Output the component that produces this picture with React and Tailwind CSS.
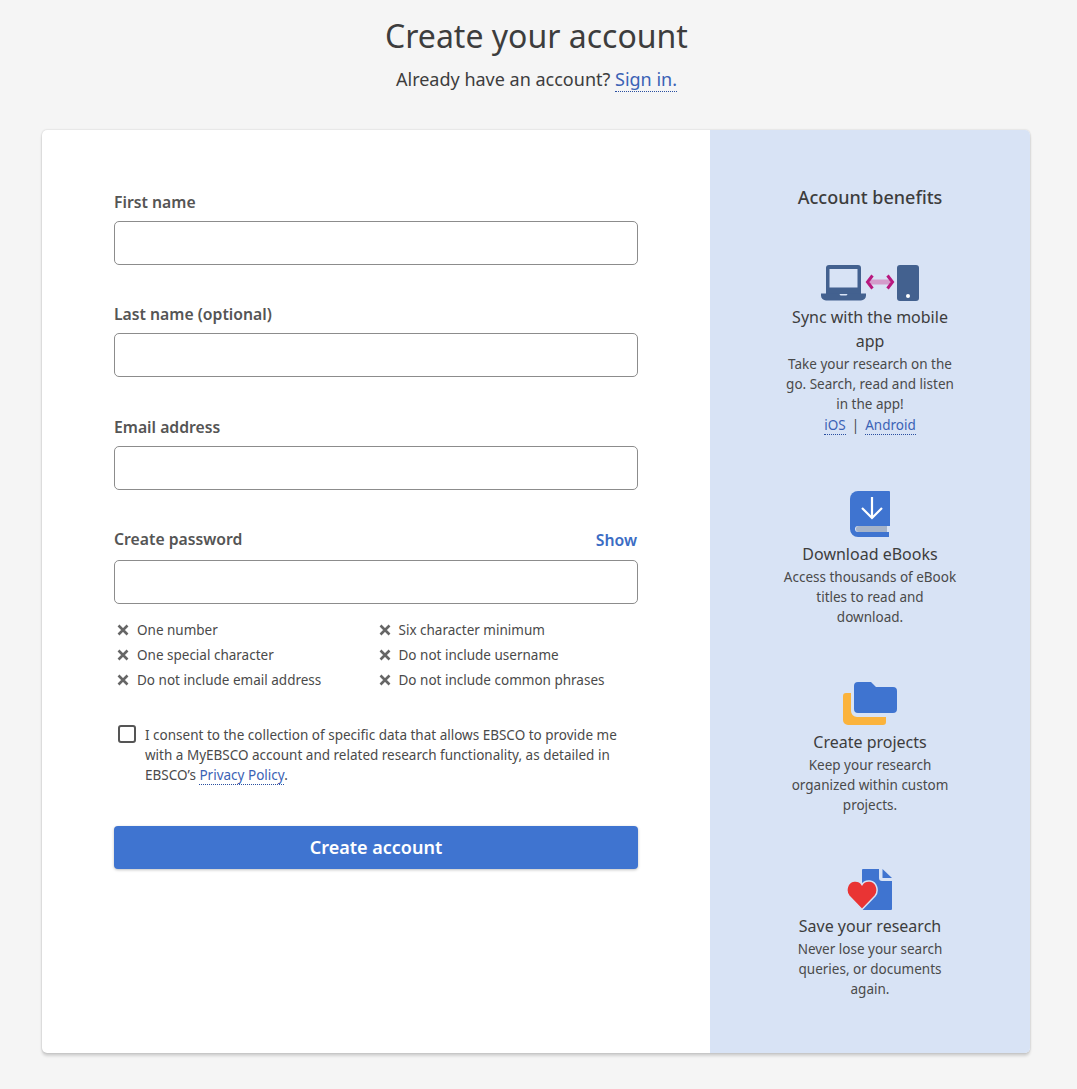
const Field = ({ label, action, labelGap = 'mb-[7px]', className = '' }) => (
  <div className={className}>
    <div className={`flex items-center justify-between h-[24px] ${labelGap}`}>
      <label className="text-[15.75px] leading-[24px] font-semibold text-[#555555]">{label}</label>
      {action && <button className="text-[15.75px] leading-[24px] font-semibold text-[#3b6cc4] pr-px mt-[2px]">{action}</button>}
    </div>
    <input type="text" className="block w-full h-[44px] rounded-[5px] border border-[#8c8c8c] bg-white" />
  </div>
)

const Req = ({ children }) => (
  <div className="flex items-center h-[25px] text-[13.5px] text-[#4a4a4a]">
    <svg width="12" height="12" viewBox="0 0 12 12" className="mr-[8px] ml-[2px] mb-[2px] shrink-0">
      <path d="M1.500 1.500l9 9M10.500 1.500l-9 9" stroke="#666666" strokeWidth="2.600" />
    </svg>
    {children}
  </div>
)

const Benefit = ({ icon, title, iconClass, children }) => (
  <div className="flex flex-col items-center text-center">
    <div className={`flex items-start justify-center ${iconClass}`}>{icon}</div>
    <h3 className="text-[16px] leading-[24px] font-normal text-[#3d3d3d] w-[180px]">{title}</h3>
    <div className="mt-px text-[13.5px] leading-[20px] text-[#4a4a4a] w-[176px]">{children}</div>
  </div>
)

const SyncIcon = () => (
  <svg width="100" height="38" viewBox="0 0 100 38">
    <path d="M6 4a3 3 0 0 1 3-3h29a3 3 0 0 1 3 3v26H6z M9.500 5v18.500h28V5z" fill="#43618f" fillRule="evenodd" />
    <path d="M1 29.500h18l1.500 2h6l1.500-2h18v2a5 5 0 0 1-5 5H6a5 5 0 0 1-5-5z" fill="#43618f" />
    <rect x="50" y="15.500" width="20" height="5" fill="#d49ccb" />
    <path d="M52.500 11.500L47.500 18l5 6.500M67.500 11.500l5 6.500-5 6.500" fill="none" stroke="#b8187f" strokeWidth="3" />
    <rect x="77" y="1" width="22" height="36" rx="3" fill="#43618f" />
    <circle cx="88" cy="32" r="2" fill="#ffffff" />
  </svg>
)

const BookIcon = () => (
  <svg width="40" height="47" viewBox="0 0 40 47">
    <path d="M8 0h31a1 1 0 0 1 1 1v34H0V8a8 8 0 0 1 8-8z" fill="#3f74d0" />
    <path d="M0 30h8v5a3 3 0 0 0 0 6h31v5H8a8 8 0 0 1-8-8z" fill="#3f74d0" />
    <path d="M9 35h28v6H9a3 3 0 0 1 0-6z" fill="#a5b3c9" />
    <path d="M22 6v21M12 17l10 10 10-10" fill="none" stroke="#ffffff" strokeWidth="2.200" />
  </svg>
)

const FolderIcon = () => (
  <svg width="54" height="43" viewBox="0 0 54 43">
    <path d="M3 11h5v18a6 6 0 0 0 6 6h29v5a3 3 0 0 1-3 3H5a5 5 0 0 1-5-5V14a3 3 0 0 1 3-3z" fill="#fbb33c" />
    <path d="M15 0h13l5 5h17a4 4 0 0 1 4 4v18a4 4 0 0 1-4 4H15a4 4 0 0 1-4-4V4a4 4 0 0 1 4-4z" fill="#3f74d0" />
  </svg>
)

const HeartIcon = () => (
  <svg width="48" height="41" viewBox="0 0 48 41">
    <path d="M17 0H33v9a3 3 0 0 0 3 3H46v28a1 1 0 0 1-1 1H17a1 1 0 0 1-1-1V1a1 1 0 0 1 1-1z" fill="#3f74d0" />
    <path d="M36.500 0L46 9H36.500z" fill="#3f74d0" />
    <path d="M16 40.500L3 27C-1 22 1 13 8 12C11.500 11.500 14.500 13 16 15.500C17.500 13 20.500 11.500 24 12C31 13 33 22 29 27Z" fill="#e93434" stroke="#d8e3f5" strokeWidth="1.500" />
  </svg>
)

const App = () => {
  return (
    <div className="min-h-[1089px] bg-[#f5f5f5] text-[#3d3d3d]" style={{ fontFamily: '"Noto Sans", sans-serif' }}>
      <div className="text-center pt-[12px] pr-[4px]">
        <h1 className="text-[32px] leading-[48px] font-normal text-[#3d3d3d]">Create your account</h1>
        <p className="mt-[5px] text-[18px] leading-[28px] text-[#3d3d3d]">
          Already have an account?{' '}
          <a className="text-[#3b62b5] border-b border-dotted border-[#2a4fa0]">Sign in.</a>
        </p>
      </div>

      <div className="mt-[37px] mx-[42px] w-[988px] h-[923px] flex rounded-[5px] overflow-hidden bg-white shadow-[0_0_2px_rgba(0,0,0,0.2),0_3px_3px_rgba(0,0,0,0.15)]">
        <div className="w-[668px] pl-[72px] pr-[72px] pt-[60px]">
          <Field label="First name" />
          <Field label="Last name (optional)" className="mt-[37px]" />
          <Field label="Email address" className="mt-[38px]" />
          <Field label="Create password" action="Show" labelGap="mb-[9px]" className="mt-[37px]" />

          <div className="grid grid-cols-2 mt-[14px] ml-px">
            <Req>One number</Req>
            <Req>Six character minimum</Req>
            <Req>One special character</Req>
            <Req>Do not include username</Req>
            <Req>Do not include email address</Req>
            <Req>Do not include common phrases</Req>
          </div>

          <div className="flex mt-[32px] pl-[4px]">
            <input type="checkbox" className="appearance-none shrink-0 w-[18px] h-[18px] mr-[9px] rounded-[3px] border-2 border-[#555555] bg-white" />
            <p className="text-[13.5px] leading-[20px] text-[#4a4a4a]">
              I consent to the collection of specific data that allows EBSCO to provide me with a MyEBSCO account and related research functionality, as detailed in EBSCO’s{' '}
              <a className="text-[#3b62b5] border-b border-dotted border-[#2a4fa0]">Privacy Policy</a>.
            </p>
          </div>

          <button className="mt-[41px] w-full h-[43px] rounded-[4px] bg-[#3f74d0] text-white text-[18px] font-semibold shadow-[0_1px_3px_rgba(0,0,0,0.25)]">
            Create account
          </button>
        </div>

        <div className="w-[320px] bg-[#d8e3f5] pt-[53px]">
          <h2 className="text-center text-[18px] leading-[28px] font-medium text-[#3d3d3d]">Account benefits</h2>
          <Benefit icon={<SyncIcon />} title="Sync with the mobile app" iconClass="mt-[53px] h-[38px] mb-[3px]">
            Take your research on the go. Search, read and listen in the app!
            <div className="mt-px">
              <a className="text-[#3b62b5] border-b border-dotted border-[#2a4fa0]">iOS</a>
              <span className="mx-[6px]">|</span>
              <a className="text-[#3b62b5] border-b border-dotted border-[#2a4fa0]">Android</a>
            </div>
          </Benefit>
          <Benefit icon={<BookIcon />} title="Download eBooks" iconClass="mt-[56px] h-[47px] mb-[4px]">
            Access thousands of eBook titles to read and download.
          </Benefit>
          <Benefit icon={<FolderIcon />} title="Create projects" iconClass="mt-[55px] h-[43px] mb-[5px]">
            Keep your research organized within custom projects.
          </Benefit>
          <Benefit icon={<HeartIcon />} title="Save your research" iconClass="mt-[54px] h-[41px] mb-[4px]">
            Never lose your search queries, or documents again.
          </Benefit>
        </div>
      </div>
    </div>
  )
}

export default App
